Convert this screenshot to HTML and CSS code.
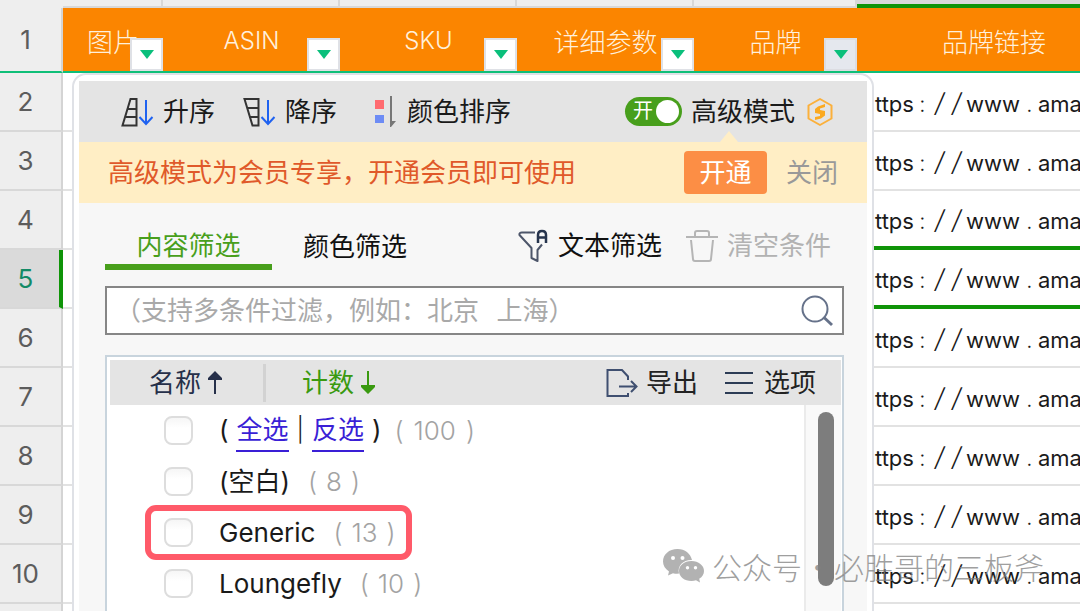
FILE: index.html
```html
<!DOCTYPE html>
<html lang="zh-CN">
<head>
<meta charset="utf-8">
<title>筛选</title>
<link rel="stylesheet" href="styles.css">
</head>
<body>
<main class="sheet">
  <table class="grid">
    <colgroup><col class="c-num"><col class="c-img"><col class="c-wide"><col class="c-wide"><col class="c-wide"><col class="c-brand"><col class="c-link"></colgroup>
    <thead>
      <tr class="letters"><td></td><td></td><td></td><td></td><td></td><td></td><td class="active"></td></tr>
      <tr class="titles">
        <th class="num" scope="row">1</th>
        <th scope="col"><div class="title">图片<button class="drop" aria-label="筛选图片"></button></div></th>
        <th scope="col"><div class="title latin">ASIN<button class="drop" aria-label="筛选ASIN"></button></div></th>
        <th scope="col"><div class="title latin">SKU<button class="drop" aria-label="筛选SKU"></button></div></th>
        <th scope="col"><div class="title">详细参数<button class="drop" aria-label="筛选详细参数"></button></div></th>
        <th scope="col"><div class="title">品牌<button class="drop open" aria-label="筛选品牌"></button></div></th>
        <th scope="col"><div class="title">品牌链接</div></th>
      </tr>
    </thead>
    <tbody>
      <tr><th class="num" scope="row">2</th><td></td><td></td><td></td><td></td><td></td><td class="url">https<i>:</i><b>/</b><b>/</b><span>www</span><i>.</i>ama</td></tr>
      <tr><th class="num" scope="row">3</th><td></td><td></td><td></td><td></td><td></td><td class="url">https<i>:</i><b>/</b><b>/</b><span>www</span><i>.</i>ama</td></tr>
      <tr class="above"><th class="num" scope="row">4</th><td></td><td></td><td></td><td></td><td></td><td class="url">https<i>:</i><b>/</b><b>/</b><span>www</span><i>.</i>ama</td></tr>
      <tr class="current"><th class="num" scope="row">5</th><td></td><td></td><td></td><td></td><td></td><td class="url">https<i>:</i><b>/</b><b>/</b><span>www</span><i>.</i>ama</td></tr>
      <tr><th class="num" scope="row">6</th><td></td><td></td><td></td><td></td><td></td><td class="url">https<i>:</i><b>/</b><b>/</b><span>www</span><i>.</i>ama</td></tr>
      <tr><th class="num" scope="row">7</th><td></td><td></td><td></td><td></td><td></td><td class="url">https<i>:</i><b>/</b><b>/</b><span>www</span><i>.</i>ama</td></tr>
      <tr><th class="num" scope="row">8</th><td></td><td></td><td></td><td></td><td></td><td class="url">https<i>:</i><b>/</b><b>/</b><span>www</span><i>.</i>ama</td></tr>
      <tr><th class="num" scope="row">9</th><td></td><td></td><td></td><td></td><td></td><td class="url">https<i>:</i><b>/</b><b>/</b><span>www</span><i>.</i>ama</td></tr>
      <tr><th class="num" scope="row">10</th><td></td><td></td><td></td><td></td><td></td><td class="url">https<i>:</i><b>/</b><b>/</b><span>www</span><i>.</i>ama</td></tr>
      <tr><th class="num" scope="row"></th><td></td><td></td><td></td><td></td><td></td><td></td></tr>
    </tbody>
  </table>

  <section class="popup" aria-label="筛选">
    <div class="toolbar">
      <button class="tool"><svg width="33" height="30" viewBox="0 0 33 30" fill="none" stroke="#333" stroke-width="2"><path d="M9.500 2H15.500V28.500H1.500ZM7 12H15M5 20H15"/><path stroke="#1f62f0" d="M25 3V27M18.500 20L25 27L31.500 20"/></svg>升序</button>
      <button class="tool"><svg width="33" height="30" viewBox="0 0 33 30" fill="none" stroke="#333" stroke-width="2"><path d="M1.500 2H15.500V28.500H9.500ZM4 11H15M6 20H15"/><path stroke="#1f62f0" d="M25 3V27M18.500 20L25 27L31.500 20"/></svg>降序</button>
      <button class="tool color"><svg width="23" height="32" viewBox="0 0 23 32"><path fill="#ff6b70" d="M0 4h9v9H0z"/><path fill="#6d8cf5" d="M0 19h9v8H0z"/><path fill="#777" d="M15 0h2v25h4l-5 6h-1z"/></svg>颜色排序</button>
      <label class="advanced"><span class="switch"><input type="checkbox" role="switch" checked><span>开</span></span>高级模式</label>
      <svg class="coin" width="28" height="30" viewBox="0 0 28 30"><path d="M14 2L25.500 8.500V21.500L14 28L2.500 21.500V8.500Z" fill="none" stroke="#fbb03b" stroke-width="2" stroke-linejoin="round"/><path d="M19 7L12 9.500L9 12V16L14 17V19L9 20V23L15 21.500L19 18.500V14L14 13V11.500L19 10Z" fill="#fba91f"/></svg>
    </div>
    <div class="banner">
      <span>高级模式为会员专享，开通会员即可使用</span>
      <button class="buy">开通</button>
      <button class="close">关闭</button>
    </div>
    <div class="body">
      <div class="tabs">
        <button class="tab on">内容筛选</button>
        <button class="tab">颜色筛选</button>
        <button class="act text"><svg width="30" height="34" viewBox="0 0 30 34" fill="none" stroke="#4d566a" stroke-width="2"><path d="M17 3.500H4Q1 3.500 1.500 6L13.500 19V29L19.500 32V21L24 15.500" stroke-linejoin="round"/><path stroke="#26344d" stroke-width="2.500" d="M20 14V6Q20 2 24 2Q28 2 28 6V14M20 8.500H28"/></svg>文本筛选</button>
        <button class="act clear"><svg width="32" height="34" viewBox="0 0 32 34" fill="none" stroke="#b5b5b5" stroke-width="2"><path d="M0 8H32M9 8V4Q9 2 11 2H21Q23 2 23 4V8M5 11L7 30Q7 32 9 32H23Q25 32 25 30L27 11"/></svg>清空条件</button>
      </div>
      <div class="search">
        <input type="text" aria-label="搜索" placeholder="（支持多条件过滤，例如：北京   上海）">
        <svg width="32" height="32" viewBox="0 0 32 32" fill="none" stroke="#66728a" stroke-width="2"><circle cx="14" cy="14" r="12.500"/><path stroke-width="3" d="M22.500 22L31 30"/></svg>
      </div>
      <div class="list">
        <div class="listhead">
          <button class="name">名称<svg width="16" height="24" viewBox="0 0 16 24"><path fill="#26304a" d="M8 0L15 7V9H9V23H7V9H1V7Z"/></svg></button>
          <button class="count">计数<svg width="16" height="24" viewBox="0 0 16 24"><path fill="#3a9a10" d="M8 23L15 16V14H9V0H7V14H1V16Z"/></svg></button>
          <button class="export"><svg width="32" height="30" viewBox="0 0 32 30" fill="none" stroke="#3f4f70" stroke-width="2"><path d="M22 25V28H1.500V2H16L22 8.500V12M13 18.500H29M25 13L30.500 18.500L25 24"/></svg>导出</button>
          <button class="options"><svg width="28" height="24" viewBox="0 0 28 24" stroke="#2c3c55" stroke-width="2"><path d="M0 2H28M0 12H28M0 22H28"/></svg>选项</button>
        </div>
        <div class="scroller">
          <ul class="items">
            <li><input type="checkbox" id="all" aria-label="全选"><span class="all">(<a href="#all">全选</a><span class="bar">|</span><a href="#inv">反选</a>)</span><span class="n"><span>(</span>100<span>)</span></span></li>
            <li><input type="checkbox" id="blank"><label for="blank">(空白)</label><span class="n"><span>(</span>8<span>)</span></span></li>
            <li class="marked"><input type="checkbox" id="generic"><label for="generic">Generic</label><span class="n"><span>(</span>13<span>)</span></span></li>
            <li><input type="checkbox" id="lounge"><label for="lounge">Loungefly</label><span class="n"><span>(</span>10<span>)</span></span></li>
          </ul>
          <div class="track"><div class="thumb"></div></div>
        </div>
      </div>
    </div>
  </section>

  <div class="watermark">
    <svg width="42" height="34" viewBox="0 0 42 34"><path fill="#999" d="M14.500 0C6 0 0 5.500 0 12.500C0 16.500 2 19.800 6 22.500L5 26.500L10 24.200Q13 25 16 24.600C14 16 21 10.500 29 11C27.500 4.500 22 0 14.500 0Z"/><path fill="#999" d="M28.500 12C21 12 16 16.500 16 22C16 28 21.500 32 28.500 32Q31 32 33 31.300L37 33.500L36.200 29.800C39.500 27.800 41 25 41 22C41 16.500 35.500 12 28.500 12Z"/><g fill="#fff"><circle cx="10" cy="9" r="2"/><circle cx="19.500" cy="9" r="2"/><circle cx="24.500" cy="18.800" r="1.700"/><circle cx="32.500" cy="18.800" r="1.700"/></g></svg>
    <span>公众号</span><span class="dot">·</span><span>必胜哥的三板斧</span>
  </div>
</main>
</body>
</html>
```
FILE: styles.css
```css
* { box-sizing: border-box; }
body {
  margin: 0;
  background: #fff;
  color: #1a1a1a;
  font: 26px/36px "Inter", "Noto Sans CJK SC", sans-serif;
}
button {
  display: flex;
  align-items: center;
  padding: 0;
  border: 0;
  background: none;
  color: inherit;
  font: inherit;
  white-space: nowrap;
}
svg { flex: none; display: block; }

.sheet { position: relative; height: 100vh; overflow: hidden; }

/* Spreadsheet */
.grid { width: 1131px; min-width: 100%; table-layout: fixed; border-collapse: separate; border-spacing: 0; }
.grid td, .grid th { padding: 0; font-weight: 400; }
.c-num { width: 63px; }
.c-img { width: 100px; }
.c-wide { width: 177px; }
.c-brand { width: 163px; }
.letters td { height: 8px; background: #eee; border-right: 2px solid #d8d8d8; border-bottom: 2px solid #d8d8d8; }
.letters td:first-child { border-color: #eee; }
.letters .active { background: #d9d9d9; border-bottom: 4px solid #0f9408; }
.grid .num { background: #eee; color: #5c5c5c; border-right: 2px solid #d4d4d4; border-bottom: 2px solid #d8d8d8; padding-right: 10px; }
.titles th { height: 65px; background: #fb8500; border-bottom: 2px solid #0fbf78; }
.grid .titles .num { border-bottom-color: #0fbf78; }
.titles .title {
  position: relative;
  display: flex;
  align-items: center;
  justify-content: center;
  height: 63px;
  padding-top: 2px;
  color: #fff0dc;
  font-family: "Noto Sans CJK SC", sans-serif;
  font-weight: 300;
}
.titles .latin { font: 300 24px/36px "Inter", sans-serif; }
.drop {
  position: absolute;
  right: 0;
  bottom: 0;
  width: 33px;
  height: 33px;
  justify-content: center;
  background: #fff;
  border: 2px solid #dfe1e6;
}
.drop.open { background: #e5e8ee; border-color: #dcdde2; }
.drop::before { content: ""; border: 7px solid transparent; border-top: 9px solid #0abf7b; border-bottom: 0; }
.grid tbody td, .grid tbody th { height: 59px; border-bottom: 2px solid #e2e2e2; }
.grid tbody .num { border-bottom-color: #d8d8d8; }
.grid .current .num { background: #dadada; color: #138a66; border-right: 4px solid #0f9408; padding-right: 8px; }
.grid .above .url, .grid .current .url { border-bottom: 4px solid #0f9408; }
.grid .url { padding: 4px 0 0 5px; font-size: 22px; white-space: nowrap; overflow: hidden; }
.url i, .url b { display: inline-block; width: 17px; text-align: center; font-style: normal; font-weight: 300; }
.url b { font-size: 26px; line-height: 26px; font-style: italic; }
.url span { margin: 0 1px; }

/* Filter popup */
.popup {
  position: absolute;
  top: 73px;
  left: 72px;
  width: 802px;
  height: 640px;
  display: flex;
  flex-direction: column;
  padding: 6px 5px;
  border: 2px solid #dfe1e6;
  border-radius: 14px;
  background: #fff;
}
.toolbar { display: flex; align-items: center; height: 61px; padding: 0 33px 0 42px; background: #e4e4e4; }
.tool { gap: 9px; margin-right: 28px; }
.tool.color { margin-left: 10px; margin-right: auto; }
.advanced { display: flex; align-items: center; gap: 9px; }
.switch { position: relative; display: flex; width: 57px; height: 29px; border-radius: 15px; background: #489f1c; }
.switch input { position: absolute; inset: 0; margin: 0; appearance: none; }
.switch input::after { content: ""; position: absolute; top: 3px; right: 3px; width: 23px; height: 23px; border-radius: 50%; background: #fff; }
.switch span { padding-left: 8px; color: #fff; font-size: 20px; line-height: 29px; }
.coin { margin-left: 11px; }
.banner { position: relative; display: flex; align-items: center; height: 61px; padding: 0 29px; background: #ffeec5; color: #e0592a; }
.banner::before { content: ""; position: absolute; right: 129px; bottom: 100%; border: 9px solid transparent; border-bottom: 11px solid #ffeec5; border-top: 0; }
.buy { justify-content: center; width: 83px; height: 43px; margin: 0 19px 0 auto; border-radius: 4px; background: #fc8e45; color: #fff; }
.close { color: #999; }
.body { flex: 1; display: flex; flex-direction: column; padding: 24px 23px 0 26px; background: #f7f7f7; }
.tabs { display: flex; height: 43px; padding-right: 13px; }
.tab { height: 43px; padding-bottom: 4px; color: #111; }
.tab.on { justify-content: center; width: 167px; margin-right: 31px; padding-bottom: 0; border-bottom: 6px solid #489f1c; color: #489f1c; }
.act { height: 38px; gap: 10px; color: #111; }
.act.text { margin: 0 24px 0 auto; }
.act.clear { gap: 9px; color: #b2b2b2; }
.search { display: flex; align-items: center; height: 49px; margin-top: 16px; padding: 0 9px 0 8px; border: 2px solid #868686; background: #fff; }
.search input { flex: 1; min-width: 0; padding: 0 0 4px; border: 0; outline: 0; background: none; font: inherit; font-family: "Noto Sans CJK SC", sans-serif; }
.search input::placeholder { color: #a9a9a9; opacity: 1; }
.list { flex: 1; display: flex; flex-direction: column; margin-top: 20px; padding: 3px 1px 0 3px; border: 2px solid #c8d4dd; background: #fff; }
.listhead { display: flex; align-items: center; height: 45px; padding-right: 25px; background: #e4e4e4; color: #222; }
.listhead .name { gap: 6px; width: 156px; height: 38px; padding-left: 39px; border-right: 3px solid #d2d2d2; color: #26304a; }
.listhead .count { gap: 6px; padding-left: 36px; color: #3a9a10; }
.listhead .export { gap: 8px; margin: 0 27px 0 auto; }
.listhead .options { gap: 11px; }
.scroller { flex: 1; display: flex; }
.items { flex: 1; margin: 0; padding: 0 0 0 35px; list-style: none; }
.items li { display: flex; align-items: center; width: max-content; height: 51px; padding: 0 16px 0 19px; }
.items li input { appearance: none; width: 29px; height: 29px; margin: 0 26px 0 0; border: 2px solid #ddd; border-radius: 8px; background: linear-gradient(#f6f6f6, #fff 40%); }
.items .marked { position: relative; }
.items .marked::after { content: ""; position: absolute; inset: -2px 0; border: 6px solid #ff5a69; border-radius: 11px; pointer-events: none; }
.all { display: flex; gap: 8px; padding-top: 2px; }
.all .bar { font-weight: 300; font-size: 24px; }
.all a { color: #3a1fd6; text-decoration: none; border-bottom: 2px solid #3a1fd6; height: 40px; }
.n { display: flex; gap: 9px; margin-left: 18px; color: #a3a3a3; font-weight: 300; }
.all + .n { gap: 10px; margin-left: 13px; }
.track { width: 37px; padding: 7px 7px 0 12px; border-left: 2px solid #ebebeb; background: #f9f9f9; }
.thumb { width: 16px; height: 174px; border-radius: 8px; background: #7d7d7d; }

/* Account mark laid over the sheet */
.watermark { position: absolute; right: 36px; bottom: 27px; display: flex; align-items: center; color: #808080; font: 300 30px/36px "Noto Sans CJK SC", sans-serif; opacity: .75; }
.watermark svg { margin-right: 7px; }
.watermark .dot { width: 32px; text-align: center; }
```
